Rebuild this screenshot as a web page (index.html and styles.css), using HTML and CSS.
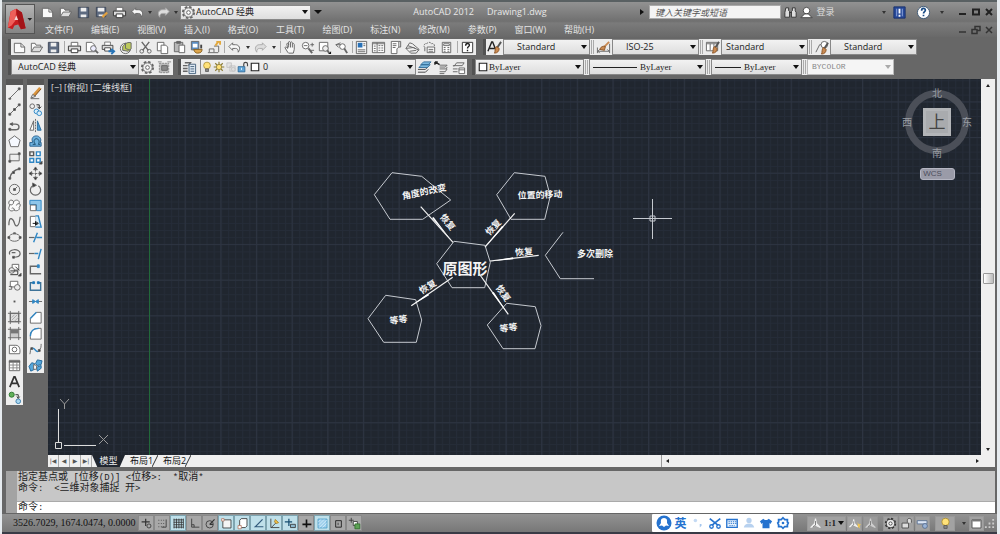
FILE: index.html
```html
<!DOCTYPE html>
<html lang="zh-CN">
<head>
<meta charset="utf-8">
<title>AutoCAD 2012 - Drawing1.dwg</title>
<link rel="stylesheet" href="styles.css">
</head>
<body>
<svg class="defs" aria-hidden="true">
  <symbol id="new" viewBox="0 0 16 16"><path d="M2.500 3.500h7l4 4v6h-11z" fill="#fafafa"/><path d="M9.500 3.500v4h4"/></symbol>
  <symbol id="open" viewBox="0 0 16 16"><path d="M2.500 12.500v-9h4l1 2h5v2" fill="#fafafa"/><path d="M2.500 12.500l3-5h9l-3 5z" fill="#ddd"/></symbol>
  <symbol id="save" viewBox="0 0 16 16"><path d="M2.500 2.500h11v11h-11z" fill="#5d6a80" stroke="#3e4857"/><path d="M5 3h6v4H5zM5 10h6v3H5z" fill="#eee" stroke="none"/></symbol>
  <symbol id="saveas" viewBox="0 0 16 16"><path d="M2.500 2.500h10v10h-10z" fill="#5d6a80" stroke="#3e4857"/><path d="M4 3h7v4H4zM5 10h5v2H5z" fill="#eee" stroke="none"/><path d="M9 13l5-5" stroke="#e0a040" stroke-width="2.500"/></symbol>
  <symbol id="print" viewBox="0 0 16 16"><path d="M4.500 6V2.500h7V6" fill="#fff"/><path d="M1.500 6.500h13v5h-13z" fill="#ddd" stroke="#333"/><path d="M4.500 9.500h7v4h-7z" fill="#fff" stroke="#333"/></symbol>
  <symbol id="preview" viewBox="0 0 16 16"><path d="M2.500 2.500h6l3 3v7h-9z" fill="#fff"/><circle cx="10" cy="9" r="3" fill="#eef"/><path d="M12 11l3 3" stroke-width="2"/></symbol>
  <symbol id="plot" viewBox="0 0 16 16"><use href="#print" width="14" height="14"/><path d="M8 12h5M11 9.500l3 2.500-3 3" stroke="#2875b8" stroke-width="2"/></symbol>
  <symbol id="globe" viewBox="0 0 16 16"><circle cx="8" cy="9" r="5.500" fill="#eee"/><path d="M5 7c3-4 6-5 9-4v6l-3 3-6-1z" fill="#bcc95c"/><path d="M8 3v6l5 2"/></symbol>
  <symbol id="cut" viewBox="0 0 16 16"><path d="M4 2l7 9M12 2L5 11" stroke-width="1.500"/><circle cx="4" cy="12" r="2"/><circle cx="12" cy="12" r="2"/></symbol>
  <symbol id="copydoc" viewBox="0 0 16 16"><path d="M2.500 2.500h7v9h-7z" fill="#fff"/><path d="M6.500 5.500h5l2 2v7h-7z" fill="#fff"/></symbol>
  <symbol id="paste" viewBox="0 0 16 16"><path d="M2.500 2.500h9v10h-9z" fill="#b8b8b8"/><path d="M5 1.500h4v2H5z" fill="#666"/><path d="M7.500 5.500h6v8h-6z" fill="#fff"/></symbol>
  <symbol id="match" viewBox="0 0 16 16"><path d="M2.500 1.500h8v9h-8z" fill="#5b8ec4"/><path d="M4 4h5v4H4z" fill="#fff" stroke="none"/><path d="M13 5v4" stroke="#444" stroke-width="2"/><path d="M5 10h9c0 3-2 4-5 4-2 0-3-1-4-4z" fill="#dca54c" stroke="#87601f"/></symbol>
  <symbol id="blockedit" viewBox="0 0 16 16"><path d="M2 13.500h11M3.500 13V9.500h5V13M8.500 6.500h5V13"/><path d="M10 6l3-4M11 2h4v3" stroke="#e3a93e" stroke-width="2"/></symbol>
  <symbol id="undo" viewBox="0 0 16 16"><path d="M6 3L2 7l4 4V9h3c2 0 3 1 3 4 3-4 1-8-3-8H6z" fill="#f6f6f6"/></symbol>
  <symbol id="redo" viewBox="0 0 16 16"><path d="M10 3l4 4-4 4V9H7c-2 0-3 1-3 4-3-4-1-8 3-8h3z" fill="#ddd" stroke="#aaa"/></symbol>
  <symbol id="hand" viewBox="0 0 16 16"><path d="M5 13L2 8c1-1 2 0 3 1L4 4c1-1 2 0 2 1V2c1-1 2 0 2 1 1-2 2-1 2 1 1-1 2 0 2 1v5l-1 4H6zM6 4v4M8 3v5M10 4v4" fill="#f8f8f8"/></symbol>
  <symbol id="zoomrt" viewBox="0 0 16 16"><circle cx="6" cy="6" r="3.500" fill="#fff"/><path d="M9 9l4 5" stroke-width="2"/><path d="M11 5h4M13 3v4M4 6h4M11 11h4"/></symbol>
  <symbol id="zoomwin" viewBox="0 0 16 16"><path d="M2.500 2.500h9v9h-9z" fill="#fff"/><circle cx="9" cy="9" r="3" fill="#eee"/><path d="M11 11l2 3" stroke-width="2"/><path d="M15 12v3h-3z" fill="#111" stroke="none"/></symbol>
  <symbol id="zoomprev" viewBox="0 0 16 16"><circle cx="9" cy="7" r="3" fill="#fff"/><path d="M11 9l3 5" stroke-width="2"/><path d="M7 3L2 5l3 3M2 5h5"/></symbol>
  <symbol id="props" viewBox="0 0 16 16"><path d="M2.500 1.500h11v13h-11z" fill="#f8f8f8"/><path d="M4 3h5v5H4z" fill="#2871b7" stroke="none"/><path d="M10 4h2M10 6h2M4 10.500h8M4 12.500h8"/></symbol>
  <symbol id="dcenter" viewBox="0 0 16 16"><path d="M1.500 2.500h13v11h-13z" fill="#fff"/><path d="M2 4h12M6.500 3v10M8 6h2M11 6h2M8 8.500h2M11 8.500h2M8 11h2M11 11h2M3 6.500h2M3 9h2M3 11.500h2"/></symbol>
  <symbol id="palette" viewBox="0 0 16 16"><path d="M3.500 1.500h8v6l-2 2v5h-6z" fill="#fff"/><path d="M5 4h4M5 6h4M5 8h3M11.500 1.500h2v6h-2"/></symbol>
  <symbol id="sheets" viewBox="0 0 16 16"><path d="M1 9l4-6 3 1 7 6-3 4H6zM1 9l8-1 6 3M3 6l8 3M5 12l7-1" fill="#f0f0f0"/></symbol>
  <symbol id="markup" viewBox="0 0 16 16"><path d="M3 8c-2-2 0-5 2-4 1-2 4-2 5 0 2-1 4 1 3 3" stroke-dasharray="2 1"/><path d="M5.500 7.500h8v6h-8z" fill="#fff"/><path d="M7 10h5M7 12h5M3 8v4"/></symbol>
  <symbol id="calc" viewBox="0 0 16 16"><path d="M3.500 2.500h9v11h-9z" fill="#fff"/><path d="M5 4h6v2H5zM5 8h2M9 8h2M5 10h2M9 10h2M5 12h2M9 12h2"/></symbol>
  <symbol id="helpbox" viewBox="0 0 16 16"><path d="M2.500 2.500h11v11h-11z" fill="#fff" stroke="#333"/><path d="M6 6c0-3 4-3 4-.5C10 7 8 7 8 9M8 10.500v1.500" stroke="#222" stroke-width="1.500"/></symbol>
  <symbol id="brush" viewBox="0 0 16 16"><path d="M15 2l-4 6" stroke="#555" stroke-width="2"/><path d="M10 7l3 2c0 3-2 5-5 5 1-2 0-5 2-7z" fill="#c98a52" stroke="#8d572a"/></symbol>
  <symbol id="textstyle" viewBox="0 0 16 16"><path d="M1 12L5 2h1l4 10M3 9h5" stroke="#222" stroke-width="1.500"/><use href="#brush"/></symbol>
  <symbol id="dimstyle" viewBox="0 0 16 16"><path d="M1.500 8v6M14.500 4v10M2 12h12M2 12l2-2M2 12l2 2M14 12l-2-2"/><path d="M14 2L9 7" stroke="#c98a52" stroke-width="2"/><path d="M4 10c1-3 4-4 6-3l-1 4z" fill="#c98a52" stroke="#8d572a"/></symbol>
  <symbol id="tablestyle" viewBox="0 0 16 16"><path d="M1.500 2.500h12v9h-12zM2 4h11M5.500 4v7M9.500 4v7" fill="#fff"/><use href="#brush"/></symbol>
  <symbol id="leaderstyle" viewBox="0 0 16 16"><path d="M2 13l4-8h3"/><circle cx="11" cy="5" r="3.500" fill="#fff"/><use href="#brush" y="1"/></symbol>
  <symbol id="gear" viewBox="0 0 16 16"><circle cx="8" cy="8" r="6" stroke-width="2" stroke-dasharray="2.700 2"/><circle cx="8" cy="8" r="5" fill="#eee"/><circle cx="8" cy="8" r="2" fill="#fff"/></symbol>
  <symbol id="wsset" viewBox="0 0 16 16"><path d="M2.500 3.500h10v10h-10z" fill="#bbb" stroke="#888" stroke-dasharray="2 1"/><path d="M5 6h6v5H5z" fill="#888"/><path d="M1 2h4M11 2h4" stroke="#888"/></symbol>
  <symbol id="layers" viewBox="0 0 16 16"><path d="M1 6h5M1 9h5M1 12h5M3 3h6l-2 3" stroke-width="1.500"/><path d="M7.500 4.500h7v10h-7z" fill="#dfe9f3" stroke="#46627e"/><path d="M9 7h4M9 9.500h4M9 12h4" stroke="#46627e"/></symbol>
  <symbol id="bulb" viewBox="0 0 16 16"><circle cx="8" cy="6" r="4.500" fill="#ffe27a" stroke="#a98a2c"/><path d="M6 10.500h4v3.500H6z" fill="#888" stroke="#555"/></symbol>
  <symbol id="sun" viewBox="0 0 16 16"><path d="M8 1v14M1 8h14M3 3l10 10M13 3L3 13" stroke="#8a7a33" stroke-width="1.500"/><circle cx="8" cy="8" r="3.500" fill="#ffe27a" stroke="#8a7a33"/></symbol>
  <symbol id="freeze" viewBox="0 0 16 16"><path d="M2.500 2.500h6v6h-6zM6.500 6.500h7v7h-7z" fill="#e3e3e3" stroke="#bbb"/><circle cx="11" cy="11" r="2.500" fill="#ddd" stroke="#bbb"/></symbol>
  <symbol id="unlock" viewBox="0 0 16 16"><path d="M1.500 7.500h9v7h-9z" fill="#5fa3d5" stroke="#245f8e"/><path d="M9 7V4c0-3 5-3 5 0v3" stroke="#444" stroke-width="1.500"/><path d="M6 9v3" stroke="#fff"/></symbol>
  <symbol id="swatch" viewBox="0 0 16 16"><path d="M3 3h10v10H3z" fill="#fff" stroke="#222" stroke-width="1.500"/></symbol>
  <symbol id="lay1" viewBox="0 0 16 16"><path d="M1 13h8l3-3M1 10h8l3-3" stroke="#444"/><path d="M2 8l3-3h9l-3 3zM4 5l3-3h8l-3 3z" fill="#7db9df" stroke="#35709b"/></symbol>
  <symbol id="lay2" viewBox="0 0 16 16"><path d="M1 2l5 3M1 2h3M1 2v3" stroke="#222" stroke-width="1.500"/><path d="M6 5.500h8l-2 2H6M6 9.500h7l1-2M6 12.500h6l2-3M6 14.500h5"/></symbol>
  <symbol id="lay3" viewBox="0 0 16 16"><path d="M3 7l3-4h8l-2 3H2M2 9.500h5M2 12.500h5"/><path d="M8.500 8.500h6v6h-6z" fill="#fff"/><path d="M8.500 10.500h6"/></symbol>

  <symbol id="line" viewBox="0 0 16 16"><path d="M3 13L13 3"/><path d="M2 13h2v1H2zM12 2h2v2h-2z" fill="#333"/></symbol>
  <symbol id="xline" viewBox="0 0 16 16"><path d="M2 14L14 2"/><path d="M2 12h2v2H2zM7 7h2v2H7zM12 2h2v2h-2z" fill="#333"/></symbol>
  <symbol id="pline" viewBox="0 0 16 16"><path d="M3 12.500h6c5 0 5-6 0-6H4" stroke-width="1.500"/><path d="M2 11h2v2H2zM6 5v3L3 6.500z" fill="#333"/></symbol>
  <symbol id="polygon" viewBox="0 0 16 16"><path d="M8 2l6 4.500-2 7H4l-2-7z" fill="#f6f9ff"/></symbol>
  <symbol id="rect" viewBox="0 0 16 16"><path d="M3 4.500h10v7H3z"/><path d="M2 11h2v2H2zM12 3h2v2h-2z" fill="#333"/></symbol>
  <symbol id="arc" viewBox="0 0 16 16"><path d="M3 13C4 7 8 4 14 3" stroke-width="1.500"/><path d="M2 12h2v2H2zM6 6h2v2H6zM12 2h2v2h-2z" fill="#333"/></symbol>
  <symbol id="circle" viewBox="0 0 16 16"><circle cx="8" cy="8" r="5.500"/><path d="M8 8l3-3M7 7h2v2H7z" fill="#333"/></symbol>
  <symbol id="cloud" viewBox="0 0 16 16"><path d="M7 4c-1-3-6-2-5 2 1 1 1 2 0 4-1 3 3 5 5 3 2 1 7 1 6-3 2-2 1-4 0-4 1-4-4-5-6-2z" fill="#fafafa"/><path d="M3 7c2 1 4 0 4-3M13 6c-2 0-3 1-3 2M5 11c1-1 3 0 3 2"/></symbol>
  <symbol id="spline" viewBox="0 0 16 16"><path d="M2 12c0-12 5-6 6-2s5 5 6-7" stroke-width="1.300"/></symbol>
  <symbol id="ellipse" viewBox="0 0 16 16"><ellipse cx="8" cy="8" rx="6" ry="4"/><path d="M1 7h2v2H1zM7 3h2v1H7zM13 7h2v2h-2z" fill="#333"/></symbol>
  <symbol id="ellarc" viewBox="0 0 16 16"><path d="M3 9C0 3 14 2 14 8c0 4-6 4-7 4M5 7h4" stroke-width="1.300"/><path d="M6 11h2v2H6z" fill="#333"/></symbol>
  <symbol id="insert" viewBox="0 0 16 16"><path d="M5.500 2.500h7v6h-7z" fill="#fff"/><circle cx="5" cy="9" r="3" fill="#eee"/><path d="M3.500 9.500h8v4h-8M9 5l4 4" stroke="#333"/><path d="M15 12v3h-3z" fill="#111"/></symbol>
  <symbol id="make" viewBox="0 0 16 16"><path d="M3.500 3.500h8v6h-8z" fill="#fff"/><circle cx="11" cy="10" r="3" fill="#eee"/><path d="M2 9h3v3H2"/></symbol>
  <symbol id="point" viewBox="0 0 16 16"><path d="M7 7h2v2H7z" fill="#555" stroke="none"/></symbol>
  <symbol id="hatch" viewBox="0 0 16 16"><path d="M3.500 3.500h9v9h-9z" fill="#ddd"/><path d="M1 3.500h14M3.500 1v14M12.500 1v14M1 12.500h14"/><path d="M5 11l6-6M5 8l3-3M8 12l4-4" stroke="#aaa"/></symbol>
  <symbol id="gradient" viewBox="0 0 16 16"><path d="M4 8h8v4H4z" fill="#ccc" stroke="none"/><path d="M4 4h8v4H4z" fill="#777" stroke="none"/><path d="M1 3.500h14M3.500 1v14M12.500 1v14M1 12.500h14"/></symbol>
  <symbol id="region" viewBox="0 0 16 16"><path d="M2.500 12.500v-9h7c4 0 5 5 4 9z" fill="#fff"/><circle cx="8" cy="8" r="2.500"/></symbol>
  <symbol id="table" viewBox="0 0 16 16"><path d="M2.500 2.500h11v11h-11z" fill="#fff"/><path d="M2 4h12" stroke-width="2"/><path d="M2 7.500h12M2 10.500h12M6.500 4v9M10.500 4v9" stroke="#888"/></symbol>
  <symbol id="mtext" viewBox="0 0 16 16"><path d="M3 14L7.500 3h1L13 14M5 10h6" stroke="#333" stroke-width="1.800"/></symbol>
  <symbol id="addsel" viewBox="0 0 16 16"><circle cx="5" cy="5" r="2.700" fill="#62b15a" stroke="#2d7530"/><circle cx="12" cy="12" r="2.500" fill="#a9d6ef" stroke="#3c7fae"/><path d="M9 5h3v3M10.500 7l1.500 2 1.500-2" stroke="#333"/></symbol>

  <symbol id="erase" viewBox="0 0 16 16"><path d="M13 2L6 10" stroke="#d9943d" stroke-width="3"/><path d="M14 3L7 11" stroke="#7c4a18"/><path d="M3 13l2-4 3 2zM3 13.500h9" fill="#eee"/></symbol>
  <symbol id="copy" viewBox="0 0 16 16"><circle cx="4.500" cy="4.500" r="2.500"/><g stroke="#2f86c4" fill="#d8ecf8"><circle cx="9" cy="10" r="2.500"/><circle cx="12" cy="12" r="2.500"/></g><path d="M9 3h3v4M10 5l2 2 2-2" stroke="#222"/></symbol>
  <symbol id="mirror" viewBox="0 0 16 16"><path d="M6 3v10H2z" fill="#fff"/><path d="M10 3v10h4z" fill="#4b9cd3" stroke="#2a6d9d"/><path d="M8 1v14" stroke-dasharray="2 1"/></symbol>
  <symbol id="offset" viewBox="0 0 16 16"><path d="M2 13V9h3C3 4 6 2 9 2s6 3 4 7h1v4z" fill="#6db1de" stroke="#265f8d"/><path d="M5 11h3C5 8 7 5 9 5s4 3 2 6h2" stroke="#194768"/></symbol>
  <symbol id="array" viewBox="0 0 16 16"><g stroke="#2f86c4" stroke-width="1.500"><path d="M2 2h4v4H2z" stroke="#555"/><path d="M9 2h4v4H9zM2 9h4v4H2zM9 9h4v4H9z" fill="#fff"/></g><path d="M15 12v3h-3z" fill="#111"/></symbol>
  <symbol id="move" viewBox="0 0 16 16"><path d="M8 3v10M3 8h10" stroke-dasharray="3 1"/><path d="M8 1l2 3H6zM8 15l2-3H6zM1 8l3-2v4zM15 8l-3-2v4z" fill="#333"/></symbol>
  <symbol id="rotate" viewBox="0 0 16 16"><path d="M5 4a5.500 5.500 0 1 0 6 0" stroke-width="1.300"/><path d="M5 1l4 2.500-4 2z" fill="#333"/></symbol>
  <symbol id="scale" viewBox="0 0 16 16"><path d="M2 2.500h12v11H9V7H2z" fill="#8fc6e9" stroke="#2f86c4"/><path d="M2.500 7.500h6v6h-6z" fill="#fff"/></symbol>
  <symbol id="stretch" viewBox="0 0 16 16"><path d="M2.500 2.500h6v11h-6z" fill="#fff"/><path d="M8 2h3l3 12H8" fill="#d8ecf8" stroke="#2f86c4" stroke-width="1.500"/><path d="M5 10h5M8 8l3 2-3 2z" stroke="#111"/></symbol>
  <symbol id="trim" viewBox="0 0 16 16"><path d="M1 8h6" stroke-width="1.300"/><path d="M9 8h6M10 3L6 13" stroke="#2f86c4" stroke-width="1.500"/></symbol>
  <symbol id="extend" viewBox="0 0 16 16"><path d="M1 8h6" stroke-width="1.300"/><path d="M7 8h4M14 3l-3 11" stroke="#2f86c4" stroke-width="1.500"/></symbol>
  <symbol id="breakpt" viewBox="0 0 16 16"><path d="M11 4.500H2.500v8H14" stroke-width="1.500"/><path d="M10 3h2v3h-2z" fill="#2f86c4" stroke="#2f86c4"/></symbol>
  <symbol id="break" viewBox="0 0 16 16"><path d="M5 5H2.500v8h11V5H11" stroke-width="1.500" stroke="#3d7297"/><path d="M5 4h2v2H5zM10 4h2v2h-2z" fill="#1f76b6" stroke="#1f76b6"/></symbol>
  <symbol id="join" viewBox="0 0 16 16"><path d="M1 8h14"/><path d="M5 6l3 2-3 2zM11 6L8 8l3 2z" fill="#2f86c4" stroke="#2f86c4"/></symbol>
  <symbol id="chamfer" viewBox="0 0 16 16"><path d="M2.500 14V9L9 2.500h5V14z" fill="#fff"/><path d="M2.500 9L9 2.500" stroke="#2f86c4" stroke-width="1.500"/></symbol>
  <symbol id="fillet" viewBox="0 0 16 16"><path d="M2.500 14v-3c0-5 3-8.500 9-8.500H14V14z" fill="#fff"/><path d="M2.500 11c0-5 3-8.500 9-8.500" stroke="#2f86c4" stroke-width="1.500"/></symbol>
  <symbol id="blend" viewBox="0 0 16 16"><path d="M2 13c1-3 0-6 2-6M12 8c2 0 2-4 2-6"/><path d="M4 7c4-2 4 6 8 2" stroke="#2f86c4" stroke-width="1.500"/><path d="M3 6h2v2H3zM11 8h2v2h-2z" fill="#333"/></symbol>
  <symbol id="explode" viewBox="0 0 16 16"><path d="M1 9l3-4 3 1v6l-4 2zM8 6l2-4 5 1-1 4-4 1zM9 10l5-2v3l-4 3z" fill="#55a6da" stroke="#21689b"/><path d="M6 7l3 1v4H6z" fill="#fff"/></symbol>

  <symbol id="s-infer" viewBox="0 0 16 16"><path d="M7 2v9M2 6h10" stroke-width="1.500"/><circle cx="11" cy="11" r="2.500"/></symbol>
  <symbol id="s-snap" viewBox="0 0 16 16"><path d="M3 4h8M3 8h8M3 12h8" stroke-dasharray="1 2"/><path d="M12.500 3v9.500H7"/></symbol>
  <symbol id="s-grid" viewBox="0 0 16 16"><path d="M2.500 2v12M5.500 2v12M8.500 2v12M11.500 2v12M14 2v12M2 3.500h12M2 6.500h12M2 9.500h12M2 12.500h12"/></symbol>
  <symbol id="s-ortho" viewBox="0 0 16 16"><path d="M4.500 2v10.500H14M4.500 9.500h3v3"/></symbol>
  <symbol id="s-polar" viewBox="0 0 16 16"><circle cx="7" cy="9" r="4.500"/><path d="M7 9l6-6M7 9h4" stroke-width="1.500"/></symbol>
  <symbol id="s-osnap" viewBox="0 0 16 16"><path d="M3.500 3.500h10v10h-10z" fill="#f4f4f4"/><path d="M2 2h3v3H2z" fill="#fff" stroke="#b47a66"/></symbol>
  <symbol id="s-3d" viewBox="0 0 16 16"><path d="M4.500 4l2-2h7v9l-2 2h-7z" fill="#fff"/><path d="M2.500 10.500h4v4h-4z" fill="#fff" stroke="#b47a66"/></symbol>
  <symbol id="s-otrack" viewBox="0 0 16 16"><path d="M13 3L4 12h10" stroke="#31597b" stroke-width="1.500"/></symbol>
  <symbol id="s-ducs" viewBox="0 0 16 16"><path d="M3.500 2v11H14M4 13l7-7" /><path d="M9 3l4 4-3 1-2-2z" fill="#f0c24b" stroke="#a87b1e"/></symbol>
  <symbol id="s-dyn" viewBox="0 0 16 16"><path d="M6 2v9M1 6h9" stroke="#164d70" stroke-width="1.500"/><path d="M8 9h6v4H8z" fill="#8db9cf"/></symbol>
  <symbol id="s-lwt" viewBox="0 0 16 16"><path d="M8 3v10M3 9h11" stroke="#111" stroke-width="2"/></symbol>
  <symbol id="s-tpy" viewBox="0 0 16 16"><path d="M2.500 2.500h11v11h-11z" fill="#9fd0ec" stroke="#4b9cc8"/><path d="M3 6l3-3M3 10l7-7M4 13l9-9M8 13l5-5" stroke="#d8eefb"/></symbol>
  <symbol id="s-qp" viewBox="0 0 16 16"><path d="M4.500 4.500h7v8h-7z" stroke="#111"/><path d="M7.500 7v3"/></symbol>
  <symbol id="s-sc" viewBox="0 0 16 16"><path d="M4 1v6M1 4h6" /><path d="M6.500 5.500h5v5h-5z" fill="#fff"/><path d="M8.500 8.500h6v6h-6z" fill="#5da255" stroke="#2d6d2a"/></symbol>
  <symbol id="anno" viewBox="0 0 16 16"><path d="M8 2l1 6 5 5-6-3-6 3 5-5z" fill="#fff" stroke="#eee" stroke-width="1.500"/><path d="M8 5v5l-3 2" stroke="#666"/></symbol>
  <symbol id="annostar" viewBox="0 0 16 16"><use href="#anno" width="14"/><path d="M12 6l1 3h3l-2 2 1 3-3-2z" fill="#f5c74c" stroke="none"/></symbol>
</svg>

<div class="window">
  <header class="header">
    <button class="app" aria-label="应用程序菜单"><svg viewBox="0 0 30 28" aria-hidden="true"><path d="M2 23L5 6l6-3 6 4 4 17-5 1-3-5-4 1-2 4z" fill="#c81d20"/><path d="M5 6l6-3-1 13-4 5-4 2z" fill="#ee5f5a"/><path d="M11 3l6 4 4 17-5 1-3-8z" fill="#a31418"/><path d="M9 15l2-5 2 5z" fill="#f0d4d2"/><path d="M23 13h5l-2.500 3z" fill="#222"/></svg></button>
    <div class="bars">
      <div class="title">
        <div class="quick">
          <button aria-label="新建"><svg class="i"><use href="#new"/></svg></button>
          <button aria-label="打开"><svg class="i"><use href="#open"/></svg></button>
          <button aria-label="保存"><svg class="i"><use href="#save"/></svg></button>
          <button aria-label="另存为"><svg class="i"><use href="#saveas"/></svg></button>
          <button aria-label="打印"><svg class="i"><use href="#print"/></svg></button>
          <button aria-label="放弃"><svg class="i"><use href="#undo"/></svg></button>
          <button class="tri" aria-label="放弃列表"></button>
          <button aria-label="重做"><svg class="i"><use href="#redo"/></svg></button>
          <button class="tri" aria-label="重做列表"></button>
        </div>
        <div class="combo ws-top"><svg class="i"><use href="#gear"/></svg><select aria-label="工作空间"><option>AutoCAD 经典</option></select></div>
        <button class="tri more" aria-label="自定义快速访问工具栏"></button>
        <div class="name"><span>AutoCAD 2012</span><span>Drawing1.dwg</span></div>
        <div class="info">
          <button class="play" aria-label="展开搜索"></button>
          <input class="search" type="text" placeholder="键入关键字或短语" aria-label="搜索">
          <button class="find" aria-label="查找"><svg class="i" viewBox="0 0 16 16"><path d="M3 3h3v3l1 1V13H2V8zM10 3h3v3l1 2v5H9V7l1-1zM7 8h2" fill="#ddd" stroke="#333"/></svg></button>
          <button class="login"><svg class="i" viewBox="0 0 16 16"><circle cx="8" cy="6" r="3.500" fill="#fff" stroke="#444"/><path d="M2 13.500l4-4h4l4 4z" fill="#fff" stroke="#444"/></svg>登录</button>
          <button class="tri" aria-label="登录选项"></button>
          <button class="xchg" aria-label="Exchange"><svg class="i" viewBox="0 0 16 16"><path d="M2 2h12v12H2z" fill="#284a9a" stroke="#19306c"/><path d="M5 4v8M11 4v8" stroke="#8ea6dd"/><path d="M8 4v5M8 10.500v2" stroke="#fff" stroke-width="2"/></svg></button>
          <button class="help" aria-label="帮助"><svg class="i" viewBox="0 0 16 16"><circle cx="8" cy="8" r="6.500" fill="#fff" stroke="#3c5774"/><path d="M6 6c0-3 4-3 4-.5C10 7 8 7 8 9M8 10.500v1.500" stroke="#194b86" stroke-width="1.800"/></svg></button>
          <button class="tri" aria-label="帮助选项"></button>
          <div class="wins">
            <button aria-label="最小化"><svg viewBox="0 0 10 10"><path d="M1 7h7"/></svg></button>
            <button aria-label="最大化"><svg viewBox="0 0 10 10"><path d="M2 2.500h6v5H2z"/></svg></button>
            <button aria-label="关闭"><svg viewBox="0 0 10 10"><path d="M2 2l6 6M8 2L2 8"/></svg></button>
          </div>
        </div>
      </div>
      <div class="menurow">
        <nav class="menu">
          <button>文件(F)</button><button>编辑(E)</button><button>视图(V)</button><button>插入(I)</button><button>格式(O)</button><button>工具(T)</button><button>绘图(D)</button><button>标注(N)</button><button>修改(M)</button><button>参数(P)</button><button>窗口(W)</button><button>帮助(H)</button>
        </nav>
        <div class="wins">
          <button aria-label="最小化图形"><svg viewBox="0 0 10 10"><path d="M1 7h7"/></svg></button>
          <button aria-label="还原图形"><svg viewBox="0 0 10 10"><path d="M1 4.500h5v4H1zM4 4V1.500h5v4H6"/></svg></button>
          <button aria-label="关闭图形"><svg viewBox="0 0 10 10"><path d="M2 2l6 6M8 2L2 8"/></svg></button>
        </div>
      </div>
    </div>
  </header>

  <div class="toolrow">
    <div class="panel std">
      <button aria-label="新建"><svg class="i"><use href="#new"/></svg></button><button aria-label="打开"><svg class="i"><use href="#open"/></svg></button><button aria-label="保存"><svg class="i"><use href="#save"/></svg></button><hr>
      <button aria-label="打印"><svg class="i"><use href="#print"/></svg></button><button aria-label="打印预览"><svg class="i"><use href="#preview"/></svg></button><button aria-label="发布"><svg class="i"><use href="#plot"/></svg></button><button aria-label="三维DWF"><svg class="i"><use href="#globe"/></svg></button><hr>
      <button aria-label="剪切"><svg class="i"><use href="#cut"/></svg></button><button aria-label="复制"><svg class="i"><use href="#copydoc"/></svg></button><button aria-label="粘贴"><svg class="i"><use href="#paste"/></svg></button><button aria-label="特性匹配"><svg class="i"><use href="#match"/></svg></button><button aria-label="块编辑器"><svg class="i"><use href="#blockedit"/></svg></button><hr>
      <button aria-label="放弃"><svg class="i"><use href="#undo"/></svg></button><button class="tri" aria-label="放弃列表"></button><button aria-label="重做"><svg class="i"><use href="#redo"/></svg></button><button class="tri" aria-label="重做列表"></button><hr>
      <button aria-label="平移"><svg class="i"><use href="#hand"/></svg></button><button aria-label="实时缩放"><svg class="i"><use href="#zoomrt"/></svg></button><button aria-label="窗口缩放"><svg class="i"><use href="#zoomwin"/></svg></button><button aria-label="缩放上一个"><svg class="i"><use href="#zoomprev"/></svg></button><hr>
      <button aria-label="特性"><svg class="i"><use href="#props"/></svg></button><button aria-label="设计中心"><svg class="i"><use href="#dcenter"/></svg></button><button aria-label="工具选项板"><svg class="i"><use href="#palette"/></svg></button><button aria-label="图纸集"><svg class="i"><use href="#sheets"/></svg></button><button aria-label="标记集"><svg class="i"><use href="#markup"/></svg></button><button aria-label="计算器"><svg class="i"><use href="#calc"/></svg></button><hr>
      <button aria-label="帮助"><svg class="i"><use href="#helpbox"/></svg></button>
    </div>
    <div class="panel styles">
      <button aria-label="文字样式"><svg class="i"><use href="#textstyle"/></svg></button>
      <select class="combo w86 indent" aria-label="文字样式列表"><option>Standard</option></select><i class="grip"></i>
      <button aria-label="标注样式"><svg class="i"><use href="#dimstyle"/></svg></button>
      <select class="combo w86 indent" aria-label="标注样式列表"><option>ISO-25</option></select><i class="grip"></i>
      <button aria-label="表格样式"><svg class="i"><use href="#tablestyle"/></svg></button>
      <select class="combo w86" aria-label="表格样式列表"><option>Standard</option></select><i class="grip"></i>
      <button aria-label="多重引线样式"><svg class="i"><use href="#leaderstyle"/></svg></button>
      <select class="combo w86 indent" aria-label="引线样式列表"><option>Standard</option></select>
    </div>
  </div>

  <div class="toolrow second">
    <div class="panel">
      <select class="combo ws" aria-label="工作空间列表"><option>AutoCAD 经典</option></select>
      <button aria-label="工作空间设置"><svg class="i"><use href="#gear"/></svg></button><button aria-label="我的工作空间"><svg class="i"><use href="#wsset"/></svg></button>
    </div>
    <div class="panel">
      <button aria-label="图层特性"><svg class="i"><use href="#layers"/></svg></button>
      <div class="combo layer"><svg class="i s"><use href="#bulb"/></svg><svg class="i s"><use href="#sun"/></svg><svg class="i s"><use href="#freeze"/></svg><svg class="i s"><use href="#unlock"/></svg><svg class="i s"><use href="#swatch"/></svg><select aria-label="图层"><option>0</option></select></div>
      <button aria-label="置为当前"><svg class="i"><use href="#lay1"/></svg></button><button aria-label="上一个图层"><svg class="i"><use href="#lay2"/></svg></button><button aria-label="图层状态"><svg class="i"><use href="#lay3"/></svg></button>
    </div>
    <div class="panel serif">
      <div class="combo color"><svg class="i s"><use href="#swatch"/></svg><select aria-label="颜色"><option>ByLayer</option></select></div><i class="grip"></i>
      <div class="combo ltype"><i class="rule long"></i><select aria-label="线型"><option>ByLayer</option></select></div><i class="grip"></i>
      <div class="combo lweight"><i class="rule"></i><select aria-label="线宽"><option>ByLayer</option></select></div><i class="grip"></i>
      <select class="combo w86 off" aria-label="打印样式" disabled><option>BYCOLOR</option></select>
    </div>
  </div>

  <main class="work">
    <div class="tools" role="toolbar" aria-label="绘图">
      <button aria-label="直线"><svg class="i"><use href="#line"/></svg></button><button aria-label="构造线"><svg class="i"><use href="#xline"/></svg></button><button aria-label="多段线"><svg class="i"><use href="#pline"/></svg></button><button aria-label="多边形"><svg class="i"><use href="#polygon"/></svg></button><button aria-label="矩形"><svg class="i"><use href="#rect"/></svg></button><button aria-label="圆弧"><svg class="i"><use href="#arc"/></svg></button><button aria-label="圆"><svg class="i"><use href="#circle"/></svg></button><button aria-label="修订云线"><svg class="i"><use href="#cloud"/></svg></button><button aria-label="样条曲线"><svg class="i"><use href="#spline"/></svg></button><button aria-label="椭圆"><svg class="i"><use href="#ellipse"/></svg></button><button aria-label="椭圆弧"><svg class="i"><use href="#ellarc"/></svg></button><button aria-label="插入块"><svg class="i"><use href="#insert"/></svg></button><button aria-label="创建块"><svg class="i"><use href="#make"/></svg></button><button aria-label="点"><svg class="i"><use href="#point"/></svg></button><button aria-label="图案填充"><svg class="i"><use href="#hatch"/></svg></button><button aria-label="渐变色"><svg class="i"><use href="#gradient"/></svg></button><button aria-label="面域"><svg class="i"><use href="#region"/></svg></button><button aria-label="表格"><svg class="i"><use href="#table"/></svg></button><button aria-label="多行文字"><svg class="i"><use href="#mtext"/></svg></button><button aria-label="添加选定对象"><svg class="i"><use href="#addsel"/></svg></button>
    </div>
    <div class="tools" role="toolbar" aria-label="修改">
      <button aria-label="删除"><svg class="i"><use href="#erase"/></svg></button><button aria-label="复制"><svg class="i"><use href="#copy"/></svg></button><button aria-label="镜像"><svg class="i"><use href="#mirror"/></svg></button><button aria-label="偏移"><svg class="i"><use href="#offset"/></svg></button><button aria-label="阵列"><svg class="i"><use href="#array"/></svg></button><button aria-label="移动"><svg class="i"><use href="#move"/></svg></button><button aria-label="旋转"><svg class="i"><use href="#rotate"/></svg></button><button aria-label="缩放"><svg class="i"><use href="#scale"/></svg></button><button aria-label="拉伸"><svg class="i"><use href="#stretch"/></svg></button><button aria-label="修剪"><svg class="i"><use href="#trim"/></svg></button><button aria-label="延伸"><svg class="i"><use href="#extend"/></svg></button><button aria-label="打断于点"><svg class="i"><use href="#breakpt"/></svg></button><button aria-label="打断"><svg class="i"><use href="#break"/></svg></button><button aria-label="合并"><svg class="i"><use href="#join"/></svg></button><button aria-label="倒角"><svg class="i"><use href="#chamfer"/></svg></button><button aria-label="圆角"><svg class="i"><use href="#fillet"/></svg></button><button aria-label="光顺曲线"><svg class="i"><use href="#blend"/></svg></button><button aria-label="分解"><svg class="i"><use href="#explode"/></svg></button>
    </div>
    <section class="doc">
      <div class="view">
        <div class="canvas">
          <svg class="model">
            <defs>
              <pattern id="minor" width="7.130" height="7.130" patternUnits="userSpaceOnUse" x="101.500" y="58.400"><path d="M.5 0v8M0 .5h8" stroke="#252c38"/></pattern>
              <pattern id="major" width="35.650" height="35.650" patternUnits="userSpaceOnUse" x="101" y="58"><path d="M.5 0v36M0 .5h36" stroke="#2d3441"/></pattern>
            </defs>
            <rect width="100%" height="100%" fill="url(#minor)"/>
            <rect width="100%" height="100%" fill="url(#major)"/>
            <path d="M101.500 0v2000" stroke="#22693a"/>
            <g transform="translate(-48 -79)">
              <g class="geo">
                <path d="M392 172.700L421.700 176.300 450.700 200 422.700 219.300H390L374.300 194.700z"/>
                <path d="M514.300 172.700L545 176.300 550.300 196 544.700 219.300H511L496.700 194.700z"/>
                <path d="M454 241.300L485 245.300 490.300 262.300 484.700 287.700H452L436.700 263.700z"/>
                <path d="M385.700 295.300L415.700 299.700 421.700 320 416.300 342.300H383.700L368 318.700z"/>
                <path d="M506.700 303.300L535.300 306.700 541 325.700 535 348.700H503L487.300 325z"/>
                <path d="M563 232.300L545.300 255.300 560.300 278.700H594"/>
                <path d="M633 218.500h39M652.500 199v40M650 216h5v5h-5z"/>
              </g>
              <g class="arrows">
                <path d="M420.700 206.700L453 242.300"/><path d="M514.700 213.300L485 247"/><path d="M490 261L538.700 255.300"/><path d="M452.700 277.300L411.300 305.700"/><path d="M479.300 274L508.300 314.300"/>
              </g>
              <path class="tips" d="M432 218l1.500-1L453 242.500zM502 226l1.500 1L485 247zM513 257.300l.3 2L490 261.500zM428 293.500l1 1.700L411 306zM492 293l1.700-1L508.500 314.500z"/>
              <g class="label">
                <text transform="translate(424 191.500) rotate(-12)">角度的改变</text>
                <text transform="translate(540 194.500) rotate(-2)">位置的移动</text>
                <text transform="translate(595 253.500)">多次删除</text>
                <text transform="translate(448 222) rotate(50)">恢复</text>
                <text transform="translate(493 227) rotate(-47)">恢复</text>
                <text transform="translate(524 251.500) rotate(-5)">恢复</text>
                <text transform="translate(427.500 286.500) rotate(-33)">恢复</text>
                <text transform="translate(503.500 293) rotate(55)">恢复</text>
                <text transform="translate(398.500 319.500) rotate(-8)">等等</text>
                <text transform="translate(508.500 327.500) rotate(-8)">等等</text>
                <text class="main" transform="translate(465 267)">原图形</text>
              </g>
            </g>
          </svg>
          <div class="viewctl"><button>[−]</button><button>[俯视]</button><button>[二维线框]</button></div>
          <svg class="ucs" viewBox="0 0 64 56" aria-hidden="true"><path d="M6.500 10v33M12 46.500h32M3.500 43.500h6v6h-6z"/><path class="dim" d="M8 0l4.500 5L17 0M12.500 5v5M47 36l9 9M56 36l-9 9"/></svg>
          <div class="cube">
            <svg viewBox="0 0 72 100"><circle cx="36" cy="37" r="28.500" fill="none" stroke="#4b4f58" stroke-width="7"/><path d="M22 23h28v28H22z" fill="#b3b5b8"/><path d="M25 26h22v22H25z" fill="#a9abae"/>
              <g class="dirs"><text x="36" y="12">北</text><text x="6" y="41">西</text><text x="66" y="41">东</text><text x="36" y="72">南</text></g><text class="top" x="36" y="43">上</text></svg>
            <button class="wcs">WCS</button>
          </div>
        </div>
        <div class="vscroll"><button class="up" aria-label="向上"></button><span class="thumb"></span><button class="down" aria-label="向下"></button></div>
      </div>
      <div class="tabs">
        <div class="nav"><button aria-label="第一个">|◀</button><button aria-label="上一个">◀</button><button aria-label="下一个">▶</button><button aria-label="最后一个">▶|</button></div>
        <button class="tab on">模型</button><button class="tab">布局1</button><button class="tab">布局2</button>
        <div class="hscroll"><button class="left" aria-label="向左"></button><button class="right" aria-label="向右"></button></div>
      </div>
    </section>
  </main>

  <section class="command">
    <div class="log"><p><span>指定基点或</span> [<span>位移</span>(D)] &lt;<span>位移</span>&gt;:  *<span>取消</span>*</p><p><span>命令</span>:  &lt;<span>三维对象捕捉</span> <span>开</span>&gt;</p></div>
    <div class="prompt"><label for="cmd"><span>命令</span>:</label><input id="cmd" type="text"></div>
  </section>

  <footer class="status">
    <output class="coords">3526.7029, 1674.0474, 0.0000</output>
    <div class="modes">
      <button aria-label="推断约束"><svg class="i"><use href="#s-infer"/></svg></button><button aria-label="捕捉"><svg class="i"><use href="#s-snap"/></svg></button><button class="on" aria-label="栅格"><svg class="i"><use href="#s-grid"/></svg></button><button aria-label="正交"><svg class="i"><use href="#s-ortho"/></svg></button><button aria-label="极轴"><svg class="i"><use href="#s-polar"/></svg></button><button class="on" aria-label="对象捕捉"><svg class="i"><use href="#s-osnap"/></svg></button><button class="on" aria-label="三维对象捕捉"><svg class="i"><use href="#s-3d"/></svg></button><button class="on" aria-label="对象追踪"><svg class="i"><use href="#s-otrack"/></svg></button><button class="on" aria-label="动态UCS"><svg class="i"><use href="#s-ducs"/></svg></button><button class="on" aria-label="动态输入"><svg class="i"><use href="#s-dyn"/></svg></button><button aria-label="线宽"><svg class="i"><use href="#s-lwt"/></svg></button><button class="on" aria-label="透明度"><svg class="i"><use href="#s-tpy"/></svg></button><button aria-label="快捷特性"><svg class="i"><use href="#s-qp"/></svg></button><button aria-label="选择循环"><svg class="i"><use href="#s-sc"/></svg></button>
    </div>
    <div class="ime">
      <button aria-label="输入法"><svg viewBox="0 0 16 16"><circle cx="8" cy="8" r="7.500" fill="#2673cf"/><path d="M8 3c4 0 3 4 3 5l2 3-3-.5L8 12l-2-1.500-3 .5 2-3c0-1-1-5 3-5z" fill="#fff"/></svg></button>
      <button>英</button>
      <button aria-label="标点"><svg viewBox="0 0 16 16"><circle cx="5" cy="5" r="2" fill="#c4daf4"/><path d="M10 9h2v2l-2 2z" fill="#a5c6ed"/></svg></button>
      <button aria-label="截图"><svg viewBox="0 0 16 16"><path d="M2 3l10 8M14 3L4 11" stroke="#2673cf" stroke-width="2"/><g fill="#fff" stroke="#2673cf" stroke-width="1.500"><circle cx="4" cy="12" r="2"/><circle cx="12" cy="12" r="2"/></g></svg></button>
      <button aria-label="软键盘"><svg viewBox="0 0 16 16"><path d="M2 4h12v9H2z" fill="#e8f2fc" stroke="#2673cf" stroke-width="1.500"/><path d="M4 6.500h9M4 8.500h9M5 11h6" stroke="#2673cf" stroke-dasharray="1.500 1"/></svg></button>
      <button aria-label="账户"><svg viewBox="0 0 16 16"><circle cx="8" cy="5" r="3" fill="#b7d1ef"/><path d="M2 13c1-6 11-6 12 0z" fill="#b7d1ef"/></svg></button>
      <button aria-label="皮肤"><svg viewBox="0 0 16 16"><path d="M5 3c1 2 5 2 6 0l4 3-2 3-1-1v6H4V8L3 9 1 6z" fill="#2673cf"/></svg></button>
      <button aria-label="设置"><svg viewBox="0 0 16 16"><path d="M8 2l2 2h3v3l1 1-1 2v2h-3l-2 2-2-2H3v-2L2 8l1-1V4h3z" fill="none" stroke="#2673cf" stroke-width="2"/><circle cx="8" cy="8" r="1.500" fill="#2673cf"/></svg></button>
    </div>
    <div class="right">
      <div class="group"><button class="ratio"><svg class="i"><use href="#anno"/></svg>1:1<i class="caret"></i></button><button aria-label="注释可见性"><svg class="i"><use href="#annostar"/></svg></button><button class="faded" aria-label="自动缩放"><svg class="i"><use href="#anno"/></svg></button></div>
      <div class="group"><button aria-label="切换工作空间"><svg class="i"><use href="#gear"/></svg></button><button aria-label="锁定"><svg class="i" viewBox="0 0 16 16"><path d="M2.500 7.500h8v6h-8zM9 7V4c0-3 5-3 5 0v3" fill="#ddd" stroke="#444"/></svg></button><button aria-label="硬件加速"><svg class="i" viewBox="0 0 16 16"><path d="M1.500 4.500h12v4h-12z" fill="#dce6f5" stroke="#526b8e"/><circle cx="11" cy="11" r="3" fill="#9ab3d6" stroke="#526b8e"/></svg></button></div>
      <div class="group"><button class="wide" aria-label="隔离对象"><svg class="i"><use href="#bulb"/></svg></button></div>
      <div class="group"><button class="tri" aria-label="状态栏菜单"></button><button aria-label="全屏显示"><svg class="i" viewBox="0 0 16 16"><path d="M2.500 3.500h11v10h-11z" fill="#fff" stroke="#444"/><path d="M3 4.500h10" stroke="#777" stroke-width="2"/></svg></button></div>
    </div>
    <svg class="corner" viewBox="0 0 12 12" aria-hidden="true"><path d="M9 1h2v2H9zM9 5h2v2H9zM5 5h2v2H5zM9 9h2v2H9zM5 9h2v2H5zM1 9h2v2H1z" fill="#ccc"/></svg>
  </footer>
</div>
</body>
</html>
```
FILE: styles.css
```css
* { box-sizing: border-box; }
body {
  margin: 0;
  background: #e6ebef;
  font: 9px/12px "Open Sans", "Noto Sans CJK SC", sans-serif;
  color: #222;
}
button, select, input { margin: 0; padding: 0; border: 0; background: none; font: inherit; color: inherit; }
button { display: flex; align-items: center; justify-content: center; flex: none; }
select { appearance: none; outline: 0; }
p { margin: 0; }
.defs { position: absolute; width: 0; height: 0; }
.i { width: 15px; height: 15px; flex: none; fill: none; stroke: #666; }
.i.s { width: 12px; height: 12px; }

.window {
  display: flex;
  flex-direction: column;
  min-height: 100vh;
  margin: 0 3px 0 2px;
  border-top: 2px solid #596062;
  border-bottom: 2px solid #393b46;
  background: #676767;
}

/* title and menu */
.header { display: flex; height: 35px; padding-left: 3px; background: linear-gradient(#929292, #707070 55%, #7b7b7b 60%, #696969); }
.app { width: 30px; height: 30px; margin-top: 2px; background: linear-gradient(#b5b5b5, #858585); border: 1px solid #555; }
.app svg { width: 28px; height: 28px; }
.bars { flex: 1; min-width: 0; }
.title { display: flex; align-items: center; height: 20px; }
.quick { display: flex; width: 145px; padding-left: 3px; }
.quick button { width: 18px; height: 18px; }
.quick .tri { width: 8px; }
.tri::after, .caret { content: ""; border: 2px solid transparent; border-top: 3px solid #333; border-bottom: 0; }
.more { width: 14px; }
.more::after { border-width: 4px 4px 0; border-top-color: #111; }
.name { display: flex; gap: 13px; flex: 1; justify-content: center; color: #e8e8e8; white-space: nowrap; }
.info { display: flex; align-items: center; height: 20px; flex: none; }
.play { width: 14px; }
.play::after { content: ""; border: 3px solid transparent; border-left: 4px solid #111; border-right: 0; }
.search { width: 132px; height: 14px; padding: 0 5px; background: #f4f4f4; border: 1px solid #aaa; font-style: italic; }
.search::placeholder { color: #555; opacity: 1; }
.find { width: 18px; }
.login { gap: 2px; width: 36px; color: #ddd; }
.info .tri { width: 10px; }
.login + .tri { margin-left: 44px; }
.help { width: 28px; }
.xchg { width: 20px; }
.info .wins { margin-left: 9px; }
.wins { display: flex; padding-right: 2px; }
.wins button { width: 13px; }
.wins svg { width: 10px; height: 10px; fill: none; stroke: #222; stroke-width: 2; }
.menurow { display: flex; justify-content: space-between; height: 15px; align-items: center; }
.menu { display: flex; gap: 18px; padding-left: 10px; color: #e4e4e4; }
.menurow .wins svg { stroke: #333; stroke-width: 1.5; }

/* toolbars */
.toolrow { display: flex; align-items: center; gap: 10px; height: 20px; padding-left: 9px; }
.second { gap: 8px; }
.panel { display: flex; align-items: center; height: 16px; background: #ececec; flex: none; box-shadow: -3px 0 #525252; }
.panel > button { width: 17px; height: 16px; }
.panel > .tri { width: 9px; }
.panel hr { width: 1px; height: 12px; margin: 0 1px 0 2px; border: 0; background: #aaa; }
.std { width: 465px; }
.combo {
  display: flex;
  align-items: center;
  height: 16px;
  padding: 0 10px 0 4px;
  border: 1px solid #888;
  background: url("data:image/svg+xml,%3Csvg xmlns='http://www.w3.org/2000/svg' width='6' height='4'%3E%3Cpath d='M0 0h6L3 4z' fill='%23111'/%3E%3C/svg%3E") no-repeat right 2px center, linear-gradient(#f2f2f2, #dedede);
}
.combo select { flex: 1; min-width: 0; }
.w86 { width: 87px; }
.indent { padding-left: 13px; }
.grip { width: 3px; height: 14px; margin: 0 1px; border: 1px solid #aaa; border-width: 0 1px; }
.ws { width: 128px; padding-left: 6px; }
.ws-top { width: 131px; height: 15px; padding-left: 0; }
.layer { width: 216px; margin: 0 0 0 2px; padding-left: 0; }
.layer select { padding-left: 2px; }
.color { width: 109px; padding-left: 1px; }
.ltype { width: 117px; padding-left: 3px; }
.lweight { width: 91px; padding-left: 3px; }
.rule { width: 26px; height: 1px; margin-right: 3px; background: #222; }
.long { width: 44px; }
.serif { font-family: "Liberation Serif", serif; }
.combo.off {
  opacity: 1;
  color: #888;
  border-color: #bbb;
  background: url("data:image/svg+xml,%3Csvg xmlns='http://www.w3.org/2000/svg' width='6' height='4'%3E%3Cpath d='M0 0h6L3 4z' fill='%23aaa'/%3E%3C/svg%3E") no-repeat right 2px center, #f5f5f5;
  font: 8px/12px "Liberation Mono", monospace;
}

/* drawing area */
.work { display: flex; align-items: flex-start; flex: 1; padding: 2px 2px 0 4px; }
.tools { display: flex; flex-direction: column; width: 17px; margin-right: 4px; background: #eee; border-top: 6px solid #565656; }
.tools button { width: 17px; height: 16px; }
.doc { display: flex; flex-direction: column; flex: 1; min-width: 0; align-self: stretch; }
.view { display: flex; flex: 1; }
.canvas { position: relative; flex: 1; min-height: 360px; background: #20262f; overflow: hidden; }
.model { position: absolute; width: 100%; height: 100%; }
.geo { fill: none; stroke: #c5c9cf; }
.arrows { stroke: #f2f2f2; stroke-width: 1.2; }
.tips { fill: #fff; }
.label { fill: #f4f4f4; font: bold 9px "Noto Sans CJK SC", sans-serif; text-anchor: middle; dominant-baseline: central; }
.main { font-size: 15px; }
.viewctl { position: absolute; left: 3px; top: 3px; display: flex; gap: 2px; color: #ddd; }
.ucs { position: absolute; left: 4px; bottom: 0; width: 64px; height: 56px; fill: none; stroke: #ddd; }
.ucs .dim { stroke: #999; }
.cube { position: absolute; right: 8px; top: 6px; width: 72px; }
.cube svg { display: block; width: 72px; height: 100px; }
.dirs { fill: #999da3; font: 10px "Noto Sans CJK SC", sans-serif; text-anchor: middle; }
.top { fill: #444; font: 17px "Noto Sans CJK SC", sans-serif; text-anchor: middle; }
.wcs { position: absolute; left: 19px; top: 83px; width: 35px; height: 12px; padding-right: 10px; border-radius: 3px; background: #9a9ba8; border: 1px solid #b5b6c2; color: #4c4e5c; font: 8px/10px "Liberation Sans", sans-serif; }
.vscroll { display: flex; flex-direction: column; justify-content: space-between; align-items: center; width: 14px; background: #efefef; }
.vscroll button { width: 14px; height: 12px; }
.up::after { content: ""; border: 2px solid transparent; border-bottom: 3px solid #222; border-top: 0; }
.down::after { content: ""; border: 2px solid transparent; border-top: 3px solid #222; border-bottom: 0; }
.thumb { width: 11px; height: 11px; margin-top: 22px; border: 1px solid #999; border-radius: 1px; background: linear-gradient(90deg, #fff, #bbb); }
.tabs { display: flex; height: 12px; background: #efefef; }
.nav { display: flex; }
.nav button { width: 11px; border-right: 1px solid #aaa; font: 6px/10px "DejaVu Sans", sans-serif; color: #555; }
.tab {
  width: 33px;
  height: 12px;
  color: #111;
  background: url("data:image/svg+xml,%3Csvg xmlns='http://www.w3.org/2000/svg' width='6' height='12'%3E%3Cpath d='M0 12L6 0' stroke='%23333'/%3E%3C/svg%3E") no-repeat right center;
}
.tab.on { background: #20262f; color: #eee; clip-path: polygon(0 0, 100% 0, 84% 100%, 16% 100%); }
.hscroll { display: flex; justify-content: space-between; width: 34%; margin: 0 12px 0 auto; padding: 0 4px; border-left: 1px solid #999; }
.left::after { content: ""; border: 2px solid transparent; border-right: 3px solid #222; border-left: 0; }
.right::after { content: ""; border: 2px solid transparent; border-left: 3px solid #222; border-right: 0; }

/* command window */
.command { margin: 4px 2px 0 4px; border-left: 11px solid #a3a3a3; background: #c7c7c7; font: 9px/11px "Liberation Mono", "Noto Sans CJK SC", monospace; }
.command span { font-size: 10px; }
.log { height: 31px; padding: 1px 0 0 1px; border-bottom: 1px solid #aaa; white-space: pre; }
.log p { height: 11px; }
.prompt { display: flex; height: 11px; padding-left: 1px; background: #fff; }
.prompt input { flex: 1; outline: 0; }

/* status bar */
.status { display: flex; align-items: center; height: 19px; padding: 0 2px 0 11px; background: linear-gradient(#929292, #777); border-top: 1px solid #666; }
.coords { width: 125px; font: 10px/16px "Liberation Serif", serif; color: #111; white-space: nowrap; }
.modes { display: flex; }
.modes button { width: 16px; height: 16px; background: #a8a8a8; border: 1px solid #8a8a8a; }
.modes .i { width: 13px; height: 13px; stroke: #333; }
.modes .on { background: #bfe0ea; border-color: #7fa5b1; }
.ime { display: flex; align-items: center; justify-content: space-between; width: 141px; height: 18px; margin-left: auto; padding: 0 3px; background: #fff; border-radius: 1px; }
.ime button { width: 17px; font: bold 12px/16px "Noto Sans CJK SC", sans-serif; color: #2673cf; }
.ime svg { width: 14px; height: 14px; fill: none; }
.ime button:first-child svg { width: 16px; height: 16px; }
.status > .right { display: flex; align-items: center; gap: 5px; margin-left: 14px; }
.status > .right::after { content: none; }
.group { display: flex; gap: 1px; }
.group button { width: 15px; height: 15px; background: #a2a2a2; border: 1px solid #999; }
.group .i { width: 13px; height: 13px; stroke: #333; }
.group .ratio { width: 39px; gap: 2px; font: bold 9px/12px "Liberation Serif", serif; }
.caret { border-width: 4px 3px 0; border-top-color: #111; }
.group .wide { width: 20px; }
.group .tri { width: 8px; background: none; border: 0; }
.faded { opacity: .7; }
.corner { width: 11px; height: 11px; flex: none; }
```
